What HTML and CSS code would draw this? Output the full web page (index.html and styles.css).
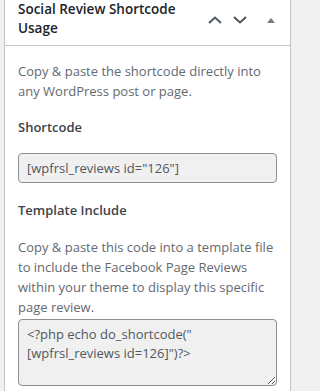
FILE: index.html
```html
<!DOCTYPE html>
<html lang="en">
<head>
<meta charset="utf-8">
<title>Social Review Shortcode Usage</title>
<link rel="stylesheet" href="styles.css">
</head>
<body>
<div class="panel">
  <div class="header">
    <h2 class="title">Social Review Shortcode Usage</h2>
    <div class="actions">
      <button class="btn btn-up" aria-label="Move up">
        <svg width="14" height="8" viewBox="0 0 14 8"><path d="M1 7 L7 1.5 L13 7" fill="none" stroke="#50575e" stroke-width="2"/></svg>
      </button>
      <button class="btn btn-down" aria-label="Move down">
        <svg width="14" height="8" viewBox="0 0 14 8"><path d="M1 1 L7 6.5 L13 1" fill="none" stroke="#50575e" stroke-width="2"/></svg>
      </button>
      <button class="btn btn-toggle" aria-label="Toggle panel">
        <svg width="8" height="5" viewBox="0 0 8 5"><path d="M0 5 L4 0 L8 5 Z" fill="#787c82"/></svg>
      </button>
    </div>
  </div>
  <div class="body">
    <p class="desc">Copy &amp; paste the shortcode directly into any WordPress post or page.</p>
    <h4 class="label">Shortcode</h4>
    <input class="field" type="text" readonly value='[wpfrsl_reviews id="126"]'>
    <h4 class="label label-2">Template Include</h4>
    <p class="desc desc-2">Copy &amp; paste this code into a template file to include the Facebook Page Reviews within your theme to display this specific page review.</p>
    <textarea class="area" readonly>&lt;?php echo do_shortcode("[wpfrsl_reviews id=126]")?&gt;</textarea>
  </div>
</div>
</body>
</html>
```
FILE: styles.css
```css
html, body {
  margin: 0;
  padding: 0;
  background: #f0f0f1;
  height: 391px;
  overflow: hidden;
}
body {
  font-family: "Open Sans", "Noto Sans", sans-serif;
}
.panel {
  margin-left: 4px;
  width: 285px;
  height: 400px;
  background: #fff;
  border-left: 1px solid #c3c4c7;
  border-right: 1px solid #c3c4c7;
}
.header {
  display: flex;
  align-items: flex-start;
  height: 46px;
  box-sizing: border-box;
  border-bottom: 1px solid #c3c4c7;
}
.title {
  flex: 1;
  margin: 0;
  padding: 0 0 0 13px;
  font-size: 13.5px;
  font-weight: 600;
  line-height: 19px;
  color: #1d2327;
}
.actions {
  display: flex;
  width: 88px;
  height: 40px;
  align-items: center;
}
.btn {
  border: 0;
  background: none;
  padding: 0;
  margin: 0;
  height: 40px;
  display: flex;
  align-items: center;
  justify-content: center;
}
.btn-up, .btn-down { width: 25px; }
.btn-toggle { width: 38px; }
.body {
  padding: 15px 13px 0 13px;
}
.desc {
  margin: 0;
  font-size: 13px;
  line-height: 20px;
  color: #646970;
}
.label {
  margin: 16px 0 16px 0;
  font-size: 13px;
  line-height: 20px;
  font-weight: 600;
  color: #3c434a;
}
.label-2 { margin: 17px 0 17px 0; }
.field {
  display: block;
  box-sizing: border-box;
  width: 259px;
  height: 30px;
  margin: 0;
  padding: 0 8px;
  border: 1px solid #8c8f94;
  border-radius: 4px;
  background: #f0f0f1;
  font-family: "Open Sans", "Noto Sans", sans-serif;
  font-size: 13px;
  color: #50575e;
  outline: none;
}
.desc-2 { margin-bottom: 2px; }
.area {
  display: block;
  box-sizing: border-box;
  width: 259px;
  height: 67px;
  margin: 0;
  padding: 5px 8px;
  border: 1px solid #8c8f94;
  border-radius: 4px;
  background: #f0f0f1;
  font-family: "Open Sans", "Noto Sans", sans-serif;
  font-size: 13px;
  line-height: 19px;
  color: #50575e;
  outline: none;
  resize: vertical;
}
```
